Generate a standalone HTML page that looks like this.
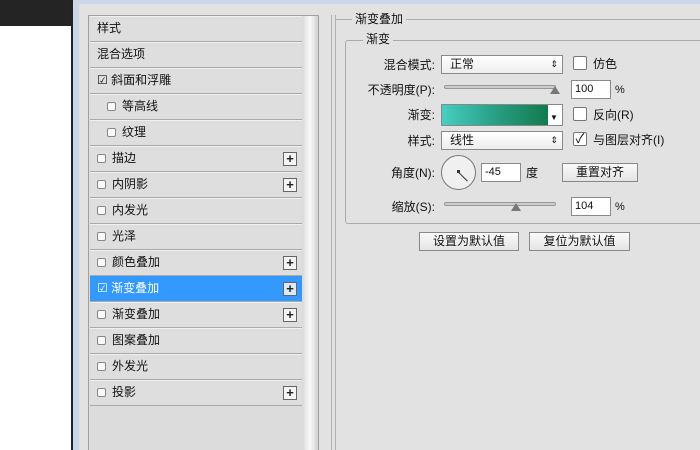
<!DOCTYPE html>
<html style="overflow:hidden"><head><meta charset="utf-8"><style>
*{margin:0;padding:0;box-sizing:border-box}
body{width:700px;height:450px;overflow:hidden;background:#e2e2e2;font-family:"Liberation Sans","Noto Sans CJK SC",sans-serif;font-size:12px;line-height:14px;color:#111;position:relative}
.a{position:absolute}
.row{position:absolute;left:90px;width:212px;height:26px;border-bottom:1px solid #a9a9a9;line-height:25px;padding-left:7px;background:#dedede;box-shadow:inset 0 1px 0 #f0f0f0}
.cb{display:inline-block;width:9px;height:9px;border:1px solid #888;background:#fafafa;border-radius:2px;vertical-align:-1px;margin-right:6px}
.plus{position:absolute;right:5px;top:6px;width:14px;height:14px;border:1px solid #666;background:#f4f4f4;font-size:13px;font-weight:bold;line-height:11px;text-align:center;color:#222}
.sel{background:#3399ff;color:#fff;box-shadow:none}
.sel .plus{background:#dbe9f8}
.inp{position:absolute;background:#fff;border:1px solid #8a8a8a;height:19px;line-height:17px;padding-left:3px;font-size:11px}
.sel2{position:absolute;background:linear-gradient(#fff,#eee);border:1px solid #8a8a8a;height:19px;line-height:17px;padding-left:8px}
.btn{position:absolute;background:linear-gradient(#fafafa,#e4e4e4);border:1px solid #888;height:19px;line-height:17px;text-align:center}
.lbl{position:absolute;text-align:right}
.track{position:absolute;height:4px;border:1px solid #999;border-radius:2px;background:#ccc}
.tri{position:absolute;width:0;height:0;border-left:5px solid transparent;border-right:5px solid transparent;border-bottom:8px solid #777}
</style></head><body>
<div class="a" style="left:0;top:0;width:72px;height:26px;background:#242424"></div>
<div class="a" style="left:0;top:26px;width:72px;height:424px;background:#fff"></div>
<div class="a" style="left:71px;top:0;width:2px;height:450px;background:#222"></div>
<div class="a" style="left:73px;top:0;width:6px;height:450px;background:#c9d7e8"></div>
<div class="a" style="left:73px;top:0;width:627px;height:4px;background:#c9d7e8"></div>
<div class="a" style="left:88px;top:15px;width:231px;height:435px;border:1px solid #a0a0a0;border-bottom:none;background:#dcdcdc"></div>
<div class="a" style="left:302px;top:16px;width:16px;height:434px;background:linear-gradient(90deg,#d8d8d8,#fafafa 50%,#d0d0d0)"></div>
<div class="a" style="left:331px;top:15px;width:5px;height:435px;border-left:1px solid #b0b0b0;border-right:1px solid #b0b0b0"></div>

<div class="row" style="top:16px">样式</div>
<div class="row" style="top:42px">混合选项</div>
<div class="row" style="top:68px">☑ 斜面和浮雕</div>
<div class="row" style="top:94px;padding-left:17px"><span class="cb"></span>等高线</div>
<div class="row" style="top:120px;padding-left:17px"><span class="cb"></span>纹理</div>
<div class="row" style="top:146px"><span class="cb"></span>描边<div class="plus">+</div></div>
<div class="row" style="top:172px"><span class="cb"></span>内阴影<div class="plus">+</div></div>
<div class="row" style="top:198px"><span class="cb"></span>内发光</div>
<div class="row" style="top:224px"><span class="cb"></span>光泽</div>
<div class="row" style="top:250px"><span class="cb"></span>颜色叠加<div class="plus">+</div></div>
<div class="row sel" style="top:276px">☑ 渐变叠加<div class="plus">+</div></div>
<div class="row" style="top:302px"><span class="cb"></span>渐变叠加<div class="plus">+</div></div>
<div class="row" style="top:328px"><span class="cb"></span>图案叠加</div>
<div class="row" style="top:354px"><span class="cb"></span>外发光</div>
<div class="row" style="top:380px"><span class="cb"></span>投影<div class="plus">+</div></div>

<div class="a" style="left:336px;top:19px;width:364px;height:1px;background:#aaa"></div>
<div class="a" style="left:352px;top:12px;background:#e2e2e2;padding:0 3px">渐变叠加</div>
<div class="a" style="left:345px;top:40px;width:360px;height:184px;border:1px solid #aaa;border-radius:3px"></div>
<div class="a" style="left:363px;top:32px;background:#e2e2e2;padding:0 3px">渐变</div>

<div class="lbl" style="left:340px;top:58px;width:95px">混合模式:</div>
<div class="sel2" style="left:441px;top:55px;width:122px">正常<span style="position:absolute;right:4px;font-size:9px">⇕</span></div>
<div class="a" style="left:573px;top:56px;width:14px;height:14px;border:1px solid #777;background:#fff;border-radius:2px"></div>
<div class="a" style="left:593px;top:57px">仿色</div>

<div class="lbl" style="left:340px;top:83px;width:95px">不透明度(P):</div>
<div class="track" style="left:444px;top:85px;width:112px"></div>
<div class="tri" style="left:550px;top:86px"></div>
<div class="inp" style="left:571px;top:80px;width:40px">100</div>
<div class="a" style="left:615px;top:83px;font-size:11px">%</div>

<div class="lbl" style="left:340px;top:108px;width:95px">渐变:</div>
<div class="a" style="left:441px;top:104px;width:122px;height:22px;border:1px solid #888;background:#fff"></div>
<div class="a" style="left:442px;top:105px;width:106px;height:20px;background:linear-gradient(90deg,#47cfc0,#2ba38c 45%,#137a4e)"></div>
<div class="a" style="left:550px;top:111px;font-size:8px">▼</div>
<div class="a" style="left:573px;top:107px;width:14px;height:14px;border:1px solid #777;background:#fff;border-radius:2px"></div>
<div class="a" style="left:593px;top:108px">反向(R)</div>

<div class="lbl" style="left:340px;top:134px;width:95px">样式:</div>
<div class="sel2" style="left:441px;top:131px;width:122px">线性<span style="position:absolute;right:4px;font-size:9px">⇕</span></div>
<div class="a" style="left:573px;top:132px;width:14px;height:14px;border:1px solid #777;background:#fff;border-radius:2px;font-size:13px;line-height:12px;text-align:center">✓</div>
<div class="a" style="left:593px;top:133px">与图层对齐(I)</div>

<div class="lbl" style="left:340px;top:166px;width:95px">角度(N):</div>
<div class="a" style="left:441px;top:155px;width:35px;height:35px;border:1px solid #777;border-radius:50%;background:#f0f0f0"></div>
<div class="a" style="left:458px;top:171px;width:14px;height:1px;background:#333;transform:rotate(45deg);transform-origin:0 0"></div>
<div class="a" style="left:457px;top:170px;width:3px;height:3px;background:#333"></div>
<div class="inp" style="left:481px;top:163px;width:40px">-45</div>
<div class="a" style="left:526px;top:166px">度</div>
<div class="btn" style="left:562px;top:163px;width:76px">重置对齐</div>

<div class="lbl" style="left:340px;top:200px;width:95px">缩放(S):</div>
<div class="track" style="left:444px;top:202px;width:112px"></div>
<div class="tri" style="left:511px;top:203px"></div>
<div class="inp" style="left:571px;top:197px;width:40px">104</div>
<div class="a" style="left:615px;top:200px;font-size:11px">%</div>

<div class="btn" style="left:419px;top:232px;width:100px">设置为默认值</div>
<div class="btn" style="left:529px;top:232px;width:101px">复位为默认值</div>
</body></html>
